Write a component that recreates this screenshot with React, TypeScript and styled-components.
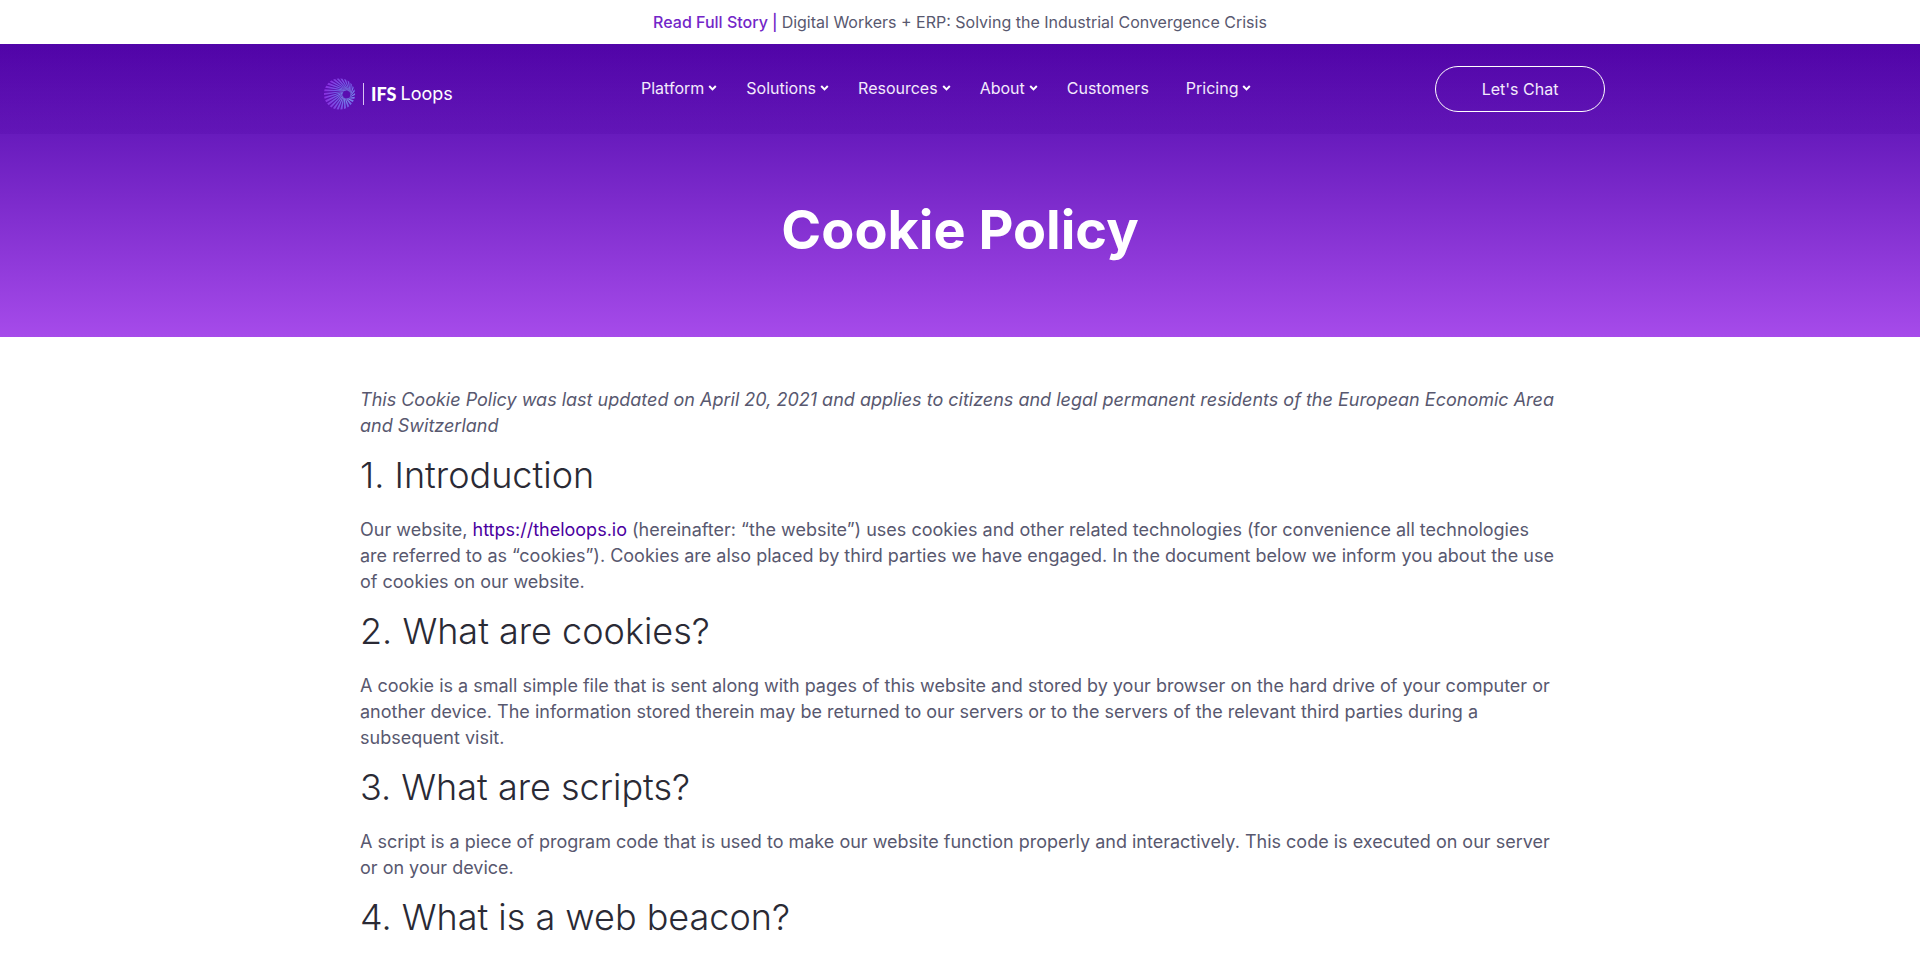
import React from "react";
import styled, { createGlobalStyle } from "styled-components";

const GlobalStyle = createGlobalStyle`
  *, *::before, *::after { box-sizing: border-box; }
  body {
    margin: 0;
    background: #fff;
    color: #58586f;
    font-family: Inter, "Liberation Sans", sans-serif;
    font-size: 18px;
    line-height: 26px;
  }
`;

const Announcement = styled.div`
  display: flex;
  justify-content: center;
  align-items: center;
  gap: 4px;
  height: 44px;
  font-size: 16px;
`;

const StoryLink = styled.a`
  color: #7326c8;
  font-weight: 500;
  text-decoration: none;
`;

const Hero = styled.div`
  background: linear-gradient(180deg, #5104a8 0%, #681bbd 31%, #a64bea 100%);
`;

const Header = styled.header`
  height: 90px;
  background: linear-gradient(180deg, rgba(75, 0, 160, 0.1), rgba(75, 0, 160, 0.2));
`;

const HeaderInner = styled.div`
  display: grid;
  grid-template-columns: 302px auto 1fr;
  align-items: center;
  max-width: 1320px;
  height: 90px;
  margin: 0 auto;
  padding: 0 15px 0 24px;
`;

const LogoLink = styled.a`
  display: flex;
  align-items: center;
  gap: 7px;
  padding-top: 10px;
  color: #fff;
  text-decoration: none;
`;

const LogoRule = styled.span`
  width: 1px;
  height: 22px;
  background: #d9c4f2;
`;

const LogoText = styled.span`
  display: flex;
  gap: 4px;
  font-size: 18px;
  line-height: 22px;
`;

const LogoBrand = styled.b`
  font-family: Lato, Inter, sans-serif;
  font-weight: 900;
`;

const Nav = styled.nav`
  display: flex;
  align-items: center;
  padding-bottom: 2px;
`;

const NavLink = styled.a<{ $menu: boolean }>`
  display: flex;
  align-items: center;
  gap: 4px;
  padding: 0 ${(p) => (p.$menu ? 14 : 22)}px 0 15px;
  color: #f3eafc;
  font-size: 16px;
  text-decoration: none;
`;

const ChatButton = styled.button`
  justify-self: end;
  width: 170px;
  height: 46px;
  border: 1px solid #fff;
  border-radius: 23px;
  background: transparent;
  color: #f3eafc;
  font-family: inherit;
  font-size: 16px;
`;

const Title = styled.h1`
  margin: 0;
  padding: 62px 20px 73px;
  color: #fff;
  font-size: 54px;
  font-weight: 700;
  line-height: 68px;
  text-align: center;
`;

const Article = styled.main`
  max-width: 1200px;
  margin: 0 auto;
  padding: 50px 0;
`;

const Paragraph = styled.p`
  margin: 0;
`;

const Intro = styled(Paragraph)`
  font-style: italic;
`;

const Heading = styled.h2`
  margin: 15px 0 20px;
  color: #2a2a35;
  font-size: 36px;
  font-weight: 300;
  line-height: 43px;
`;

const TextLink = styled.a`
  color: #4b00a0;
  text-decoration: none;
`;

const SPOKES = 26;

// Tapered rays running from an off-centre ring out to the edge of the mark.
const spokes = Array.from({ length: SPOKES }, (_, i) => {
  const angle = (i / SPOKES) * Math.PI * 2;
  const half = 0.07;
  const inner = angle + 0.9;
  const x1 = 22.5 + Math.cos(inner) * 4;
  const y1 = 16.5 + Math.sin(inner) * 4;
  const px = -Math.sin(inner) * 0.3;
  const py = Math.cos(inner) * 0.3;
  const ax = 15.5 + Math.cos(angle - half) * 15.6;
  const ay = 16 + Math.sin(angle - half) * 15.6;
  const bx = 15.5 + Math.cos(angle + half) * 15.6;
  const by = 16 + Math.sin(angle + half) * 15.6;
  return `${x1 - px},${y1 - py} ${ax},${ay} ${bx},${by} ${x1 + px},${y1 + py}`;
});

function Burst() {
  return (
    <svg width="32" height="32" viewBox="0 0 32 32" aria-hidden="true">
      <defs>
        <radialGradient id="burst" gradientUnits="userSpaceOnUse" cx="22.5" cy="17" r="22">
          <stop offset="0.15" stopColor="#7fb0f4" />
          <stop offset="0.45" stopColor="#7263e6" />
          <stop offset="1" stopColor="#8a2fe0" />
        </radialGradient>
      </defs>
      {spokes.map((points) => (
        <polygon key={points} points={points} fill="url(#burst)" />
      ))}
    </svg>
  );
}

function Chevron() {
  return (
    <svg width="9" height="8" viewBox="0 0 9 8" fill="none" aria-hidden="true">
      <path d="M1.2 2 4.5 5.4 7.8 2" stroke="#fff" strokeWidth="2" />
    </svg>
  );
}

const navItems = [
  { label: "Platform", menu: true },
  { label: "Solutions", menu: true },
  { label: "Resources", menu: true },
  { label: "About", menu: true },
  { label: "Customers", menu: false },
  { label: "Pricing", menu: true },
];

export default function App() {
  return (
    <>
      <GlobalStyle />
      <Announcement>
        <StoryLink href="#story">Read Full Story |</StoryLink>
        <span>Digital Workers + ERP: Solving the Industrial Convergence Crisis</span>
      </Announcement>
      <Hero>
        <Header>
          <HeaderInner>
            <LogoLink href="#home">
              <Burst />
              <LogoRule />
              <LogoText>
                <LogoBrand>IFS</LogoBrand>
                <span>Loops</span>
              </LogoText>
            </LogoLink>
            <Nav>
              {navItems.map((item) => (
                <NavLink
                  key={item.label}
                  href={`#${item.label.toLowerCase()}`}
                  $menu={item.menu}
                >
                  {item.label}
                  {item.menu && <Chevron />}
                </NavLink>
              ))}
            </Nav>
            <ChatButton type="button">Let's Chat</ChatButton>
          </HeaderInner>
        </Header>
        <Title>Cookie Policy</Title>
      </Hero>
      <Article>
        <Intro>
          This Cookie Policy was last updated on April 20, 2021 and applies to citizens and legal
          permanent residents of the European Economic Area and Switzerland
        </Intro>
        <Heading>1. Introduction</Heading>
        <Paragraph>
          Our website, <TextLink href="https://theloops.io">https://theloops.io</TextLink>{" "}
          (hereinafter: “the website”) uses cookies and other related technologies (for convenience
          all technologies are referred to as “cookies”). Cookies are also placed by third parties
          we have engaged. In the document below we inform you about the use of cookies on our
          website.
        </Paragraph>
        <Heading>2. What are cookies?</Heading>
        <Paragraph>
          A cookie is a small simple file that is sent along with pages of this website and stored
          by your browser on the hard drive of your computer or another device. The information
          stored therein may be returned to our servers or to the servers of the relevant third
          parties during a subsequent visit.
        </Paragraph>
        <Heading>3. What are scripts?</Heading>
        <Paragraph>
          A script is a piece of program code that is used to make our website function properly and
          interactively. This code is executed on our server or on your device.
        </Paragraph>
        <Heading>4. What is a web beacon?</Heading>
      </Article>
    </>
  );
}
